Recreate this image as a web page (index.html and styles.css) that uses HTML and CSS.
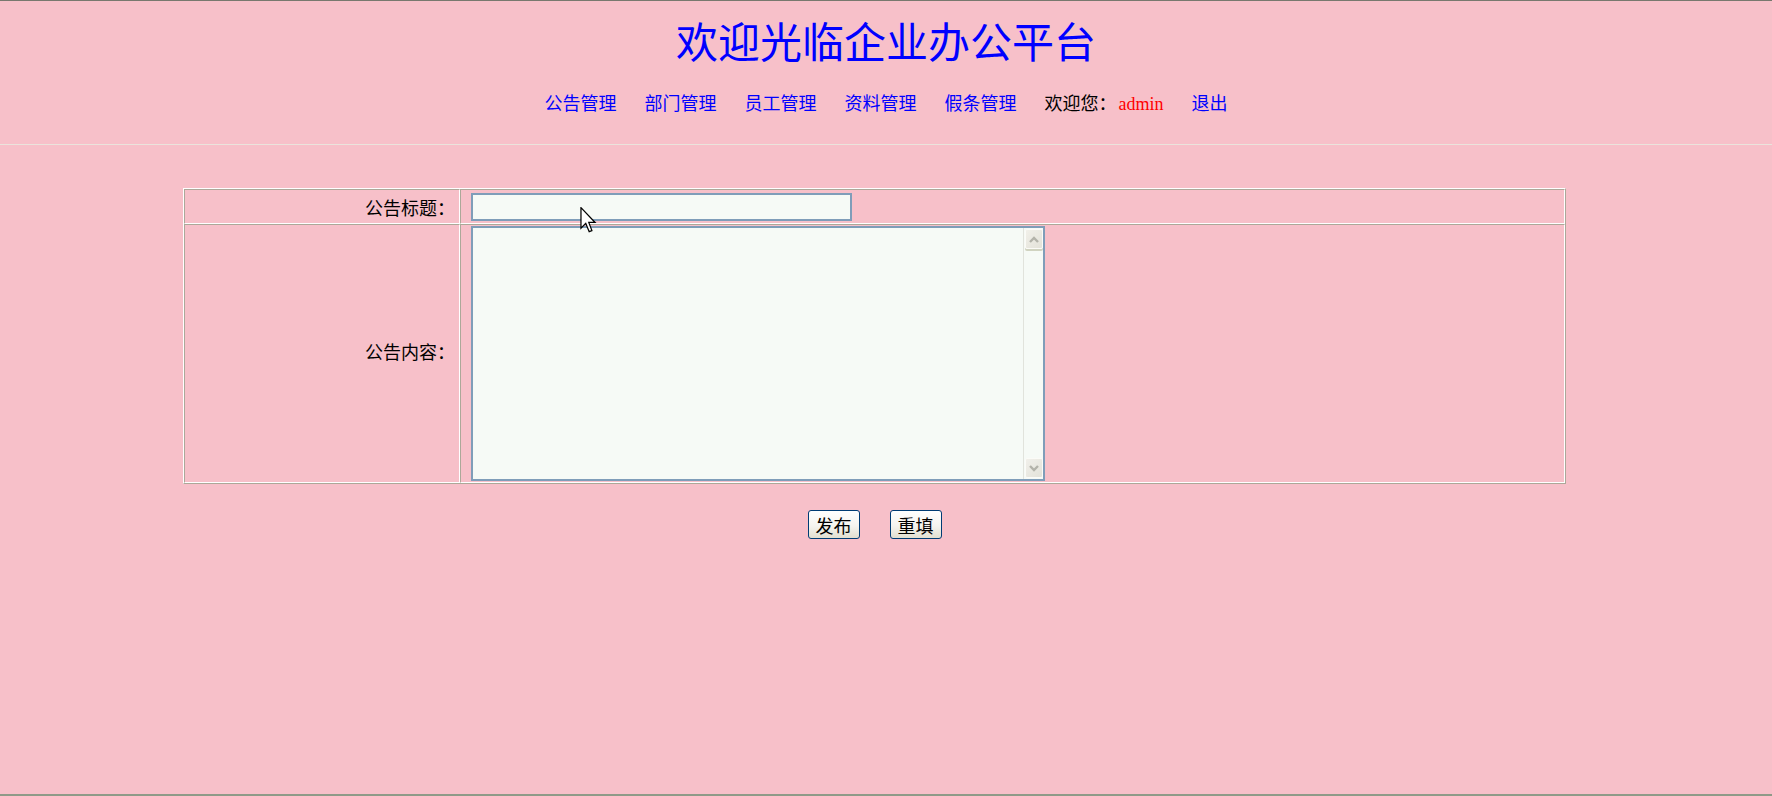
FILE: index.html
```html
<!DOCTYPE html>
<html lang="zh-CN">
<head>
<meta charset="utf-8">
<title>公告发布</title>
<link rel="stylesheet" href="styles.css">
</head>
<body>
<div class="header">
  <h1 class="title">欢迎光临企业办公平台</h1>
  <nav class="nav">
    <a href="#">公告管理</a>
    <a href="#">部门管理</a>
    <a href="#">员工管理</a>
    <a href="#">资料管理</a>
    <a href="#">假条管理</a>
    <span class="welcome">欢迎您：<span class="user">admin</span></span>
    <a href="#">退出</a>
  </nav>
</div>
<form class="content">
  <table class="form-table">
    <tr>
      <td class="label">公告标题：</td>
      <td class="field"><input type="text" class="title-input"></td>
    </tr>
    <tr>
      <td class="label label-area">公告内容：</td>
      <td class="field field-area">
        <div class="ta-box">
          <textarea class="content-area"></textarea>
          <div class="vscroll">
            <span class="sb-btn up"><svg width="10" height="7" viewBox="0 0 10 7"><polyline points="1,6 5,2 9,6" fill="none" stroke="#b3b3aa" stroke-width="2.4"/></svg></span>
            <span class="sb-track"></span>
            <span class="sb-btn down"><svg width="10" height="7" viewBox="0 0 10 7"><polyline points="1,1 5,5 9,1" fill="none" stroke="#b3b3aa" stroke-width="2.4"/></svg></span>
          </div>
        </div>
      </td>
    </tr>
  </table>
  <div class="actions">
    <button type="button" class="btn">发布</button>
    <button type="reset" class="btn">重填</button>
  </div>
</form>
<svg class="cursor" width="17" height="26" viewBox="0 0 12 19"><path d="M0.5,0.5 L0.5,15.5 L4,12 L6.5,18 L8.5,17.2 L6.2,11.3 L10.8,11.3 Z" fill="#fff" stroke="#000" stroke-width="0.9" stroke-linejoin="miter"/></svg>
</body>
</html>
```
FILE: styles.css
```css
html, body {
  margin: 0;
  padding: 0;
}

body {
  position: relative;
  height: 796px;
  box-sizing: border-box;
  overflow: hidden;
  background: #f7c0c9;
  border-top: 1px solid #78786e;
  border-bottom: 2px solid #8f9a88;
  font-family: "Noto Sans CJK SC", sans-serif;
  color: #000;
}

.header {
  padding-top: 18px;
  padding-bottom: 32px;
  border-bottom: 1px solid #ebe3dc;
}

.title {
  margin: 0;
  height: 42px;
  font-size: 42px;
  line-height: 42px;
  font-weight: normal;
  color: #0000ff;
  text-align: center;
}

.nav {
  margin-top: 32px;
  height: 19px;
  display: flex;
  align-items: flex-start;
  justify-content: center;
  gap: 28px;
  font-size: 18px;
  line-height: 18px;
}

.nav a {
  color: #0000ff;
  text-decoration: none;
}

.welcome {
  color: #000;
}

.user {
  margin-left: 2px;
  color: #ff0000;
  font-family: "Liberation Serif", serif;
  line-height: 1;
}

.content {
  margin: 43px 0 0 183px;
  width: 1383px;
}

.form-table {
  width: 100%;
  border-collapse: separate;
  border-spacing: 0;
  border: 1px solid;
  border-color: #ffffff #aca899 #aca899 #ffffff;
}

.form-table td {
  border: 1px solid;
  border-color: #aca899 #ffffff #ffffff #aca899;
  padding: 0;
}

.form-table td.label {
  width: 270px;
  padding-right: 4px;
  text-align: right;
  vertical-align: middle;
  font-size: 18px;
  line-height: 18px;
}

.form-table td.label-area {
  padding-bottom: 6px;
}

.form-table td.field {
  height: 29px;
  padding: 3px 0 1px 10px;
  vertical-align: top;
}

.form-table td.field-area {
  height: auto;
  padding: 1px 0 1px 10px;
}

.title-input {
  display: block;
  width: 381px;
  height: 28px;
  box-sizing: border-box;
  margin: 0;
  padding: 0 4px;
  border: 2px solid #7f9db9;
  background: #f6faf6;
  font-family: "Noto Sans CJK SC", sans-serif;
  font-size: 18px;
  outline: none;
}

.ta-box {
  display: flex;
  width: 574px;
  height: 255px;
  box-sizing: border-box;
  border: 2px solid #7f9db9;
  background: #f6faf6;
}

.content-area {
  display: block;
  flex: 1;
  margin: 0;
  padding: 2px;
  border: 0;
  background: transparent;
  resize: none;
  outline: none;
  font-family: "Noto Sans CJK SC", sans-serif;
  font-size: 18px;
}

.vscroll {
  flex: none;
  width: 20px;
  box-sizing: border-box;
  display: flex;
  flex-direction: column;
  padding: 1px 0 1px 1px;
  border-left: 1px solid #e1e3dc;
  background: #f6faf6;
}

.sb-btn {
  display: flex;
  align-items: center;
  justify-content: center;
  width: 18px;
  height: 20px;
  box-sizing: border-box;
  border: 1px solid #fbfbf7;
  border-radius: 2px;
  background: linear-gradient(135deg, #f1f0ea, #e3e2d9);
}

.sb-btn.up {
  box-shadow: 0 2px 0 #d0d3c0;
}

.sb-track {
  flex: 1;
}

.actions {
  display: flex;
  justify-content: center;
  gap: 30px;
  margin-top: 26px;
}

.btn {
  width: 52px;
  height: 29px;
  box-sizing: border-box;
  padding: 0;
  border: 1px solid #003c74;
  border-radius: 3px;
  background: linear-gradient(#ffffff, #f5f4ef 55%, #e2dfd0);
  font-family: "Noto Sans CJK SC", sans-serif;
  font-size: 18px;
  line-height: 1;
  color: #000;
}

.cursor {
  position: absolute;
  left: 580px;
  top: 206px;
}
```
